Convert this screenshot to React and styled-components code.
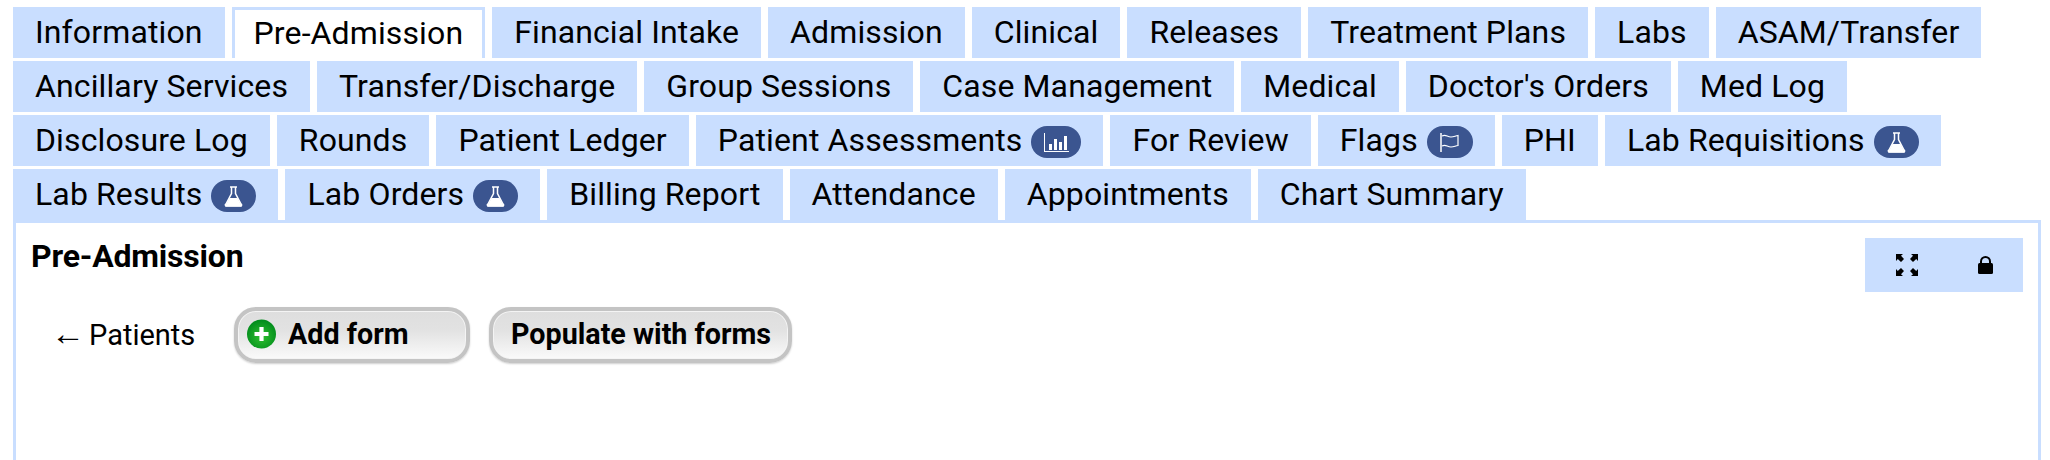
import React from 'react';
import styled, { createGlobalStyle } from 'styled-components';

const Global = createGlobalStyle`
  html, body { margin: 0; padding: 0; background: #fff; overflow: hidden; }
  body { font-family: Roboto, "Liberation Sans", sans-serif; color: #000; }
`;
const Page = styled.div`
  padding: 7px 9px 0 13px;
`;
const TabStrip = styled.nav`
  display: flex;
  flex-wrap: wrap;
  gap: 3px 7px;
`;
const Tab = styled.div`
  box-sizing: border-box;
  height: 51px;
  padding: 0 ${p => (p.$active ? 19 : 22)}px 2px;
  display: flex;
  align-items: center;
  gap: 9px;
  font-size: 32px;
  letter-spacing: 0.12px;
  line-height: 1;
  white-space: nowrap;
  background: ${p => (p.$active ? '#fff' : '#c9deff')};
  border: ${p => (p.$active ? '3px solid #c9deff' : 'none')};
  border-bottom: none;
`;
const Badge = styled.span`
  width: ${p => p.$width}px;
  height: 32px;
  margin-top: 5px;
  border-radius: 16px;
  background: #3b5590;
  display: inline-flex;
  align-items: center;
  justify-content: center;
`;
const Panel = styled.section`
  box-sizing: border-box;
  height: 300px;
  border: 3px solid #c9deff;
  padding: 15px 0 0 15px;
  display: flex;
  flex-direction: column;
`;
const Header = styled.div`
  display: flex;
  justify-content: space-between;
  align-items: flex-start;
  padding-right: 15px;
`;
const Title = styled.h2`
  margin: 0;
  font-size: 32px;
  font-weight: 700;
  line-height: 36px;
  letter-spacing: -0.2px;
`;
const Tools = styled.div`
  width: 158px;
  height: 54px;
  background: #c9deff;
  display: flex;
  align-items: center;
  padding-left: 31px;
  box-sizing: border-box;
  gap: 60px;
`;
const ActionRow = styled.div`
  margin-top: 15px;
  display: flex;
  align-items: center;
`;
const BackLink = styled.a`
  font-size: 29px;
  width: 142px;
  margin-left: 20px;
  margin-right: 41px;
  padding-bottom: 3px;
  white-space: nowrap;
  color: #000;
`;
const Arrow = styled.span`
  display: inline-block;
  margin-right: 4px;
  font-size: 34px;
  line-height: 1;
`;
const Action = styled.button`
  box-sizing: border-box;
  height: 56px;
  width: ${p => p.$width}px;
  margin-right: ${p => p.$gap || 0}px;
  border: 4px solid #c4c4c4;
  border-radius: 22px;
  padding: 0 0 2px ${p => p.$pad}px;
  display: flex;
  align-items: center;
  gap: 12px;
  font-family: inherit;
  font-size: 28.7px;
  font-weight: 700;
  color: #000;
  white-space: nowrap;
  background: linear-gradient(#dedede, #e2e2e2 40%, #fafafa);
  box-shadow: inset 0 0 0 1px #f4f4f4, 0 1px 2px #cfcfcf;
`;

const Flask = () => (
  <svg width="19" height="21" viewBox="0 0 19 21">
    <path d="M6 1h7M7.500 1v6.500L2 18a1 1 0 0 0 1 2h13a1 1 0 0 0 1-2L11.500 7.500V1" fill="none" stroke="#fff" strokeWidth="1.5" />
    <path d="M5.500 12h8l4.500 8.500H1z" fill="#fff" />
  </svg>
);
const Chart = () => (
  <svg width="25" height="19" viewBox="0 0 25 19" fill="#fff">
    <rect x="0" y="0" width="1" height="19" />
    <rect x="0" y="18" width="25" height="1" />
    <rect x="5" y="11" width="3" height="6" />
    <rect x="10" y="6" width="3" height="11" />
    <rect x="15" y="9" width="3" height="8" />
    <rect x="20" y="3" width="3" height="14" />
  </svg>
);
const Flag = () => (
  <svg width="20" height="19" viewBox="0 0 20 19" fill="none" stroke="#fff">
    <path d="M1 0v19" strokeWidth="1.500" />
    <path d="M2 3c4-2 5 1 9 1 3 0 4-1 7-1.500v10c-3 .5-4 1.500-7 1.500-4 0-5-3-9-1" strokeWidth="1.200" />
  </svg>
);
const Expand = () => (
  <svg width="22" height="22" viewBox="0 0 22 22" fill="#000">
    <path d="M0 0h7L5 1.800 8 5 5 8 1.800 5 0 7z" />
    <path d="M22 0h-7l2 1.800L14 5l3 3 3.200-3L22 7z" />
    <path d="M0 22h7l-2-1.800L8 17l-3-3-3.200 3L0 15z" />
    <path d="M22 22h-7l2-1.800L14 17l3-3 3.200 3L22 15z" />
  </svg>
);
const Lock = () => (
  <svg width="15" height="18" viewBox="0 0 15 18">
    <path d="M3 8V5.500a4.500 4.500 0 0 1 9 0V8" fill="none" stroke="#000" strokeWidth="2" />
    <rect x="0" y="7" width="15" height="11" rx="1.500" fill="#000" />
  </svg>
);
const Plus = () => (
  <svg width="29" height="30" viewBox="0 0 29 30">
    <defs>
      <radialGradient id="g" cx="50%" cy="60%" r="60%">
        <stop offset="0" stopColor="#2fc12f" />
        <stop offset="1" stopColor="#008a1c" />
      </radialGradient>
    </defs>
    <circle cx="14.500" cy="15" r="14.500" fill="url(#g)" />
    <path d="M14.500 8v14M7.500 15h14" stroke="#fff" strokeWidth="4.200" />
  </svg>
);

const icons = {
  flask: { node: <Flask />, width: 45 },
  chart: { node: <Chart />, width: 50 },
  flag: { node: <Flag />, width: 46 },
};
const tabs = [
  ['Information'], ['Pre-Admission', null, true], ['Financial Intake'], ['Admission'], ['Clinical'], ['Releases'],
  ['Treatment Plans'], ['Labs'], ['ASAM/Transfer'], ['Ancillary Services'], ['Transfer/Discharge'], ['Group Sessions'],
  ['Case Management'], ['Medical'], ["Doctor's Orders"], ['Med Log'], ['Disclosure Log'], ['Rounds'], ['Patient Ledger'],
  ['Patient Assessments', 'chart'], ['For Review'], ['Flags', 'flag'], ['PHI'], ['Lab Requisitions', 'flask'],
  ['Lab Results', 'flask'], ['Lab Orders', 'flask'], ['Billing Report'], ['Attendance'], ['Appointments'], ['Chart Summary'],
];

export default function App() {
  return (
    <Page>
      <Global />
      <TabStrip>
        {tabs.map(([label, icon, active]) => (
          <Tab key={label} $active={active}>
            {label}
            {icon && <Badge $width={icons[icon].width}>{icons[icon].node}</Badge>}
          </Tab>
        ))}
      </TabStrip>
      <Panel>
        <Header>
          <Title>Pre-Admission</Title>
          <Tools><Expand /><Lock /></Tools>
        </Header>
        <ActionRow>
          <BackLink><Arrow>←</Arrow>Patients</BackLink>
          <Action $width={236} $pad={9} $gap={19}><Plus />Add form</Action>
          <Action $width={303} $pad={18}>Populate with forms</Action>
        </ActionRow>
      </Panel>
    </Page>
  );
}
